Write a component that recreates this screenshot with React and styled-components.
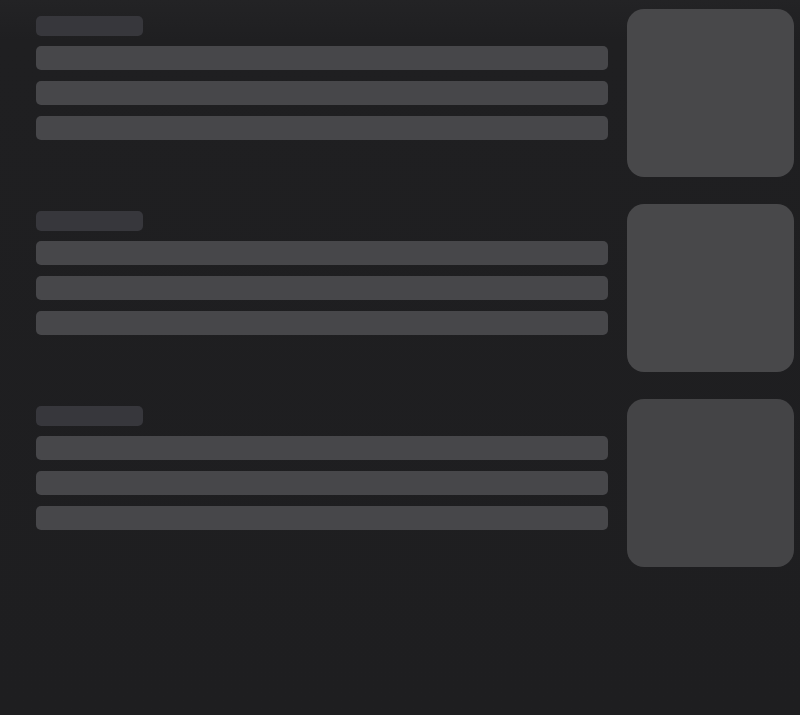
import React from "react";
import styled, { createGlobalStyle } from "styled-components";

const Global = createGlobalStyle`
  html, body { margin: 0; padding: 0; background: #1e1e20; }
  body { font-family: "Inter", "Liberation Sans", sans-serif; }
  #root { min-height: 715px; }
`;

const Page = styled.div`
  min-height: 715px;
  box-sizing: border-box;
  padding: 9px 6px 0 36px;
  display: flex;
  flex-direction: column;
  gap: 27px;
  background: linear-gradient(#232325 0px, #1f1f21 40px, #1e1e20 100%);
`;

const Row = styled.div`
  display: flex;
  gap: 19px;
  align-items: flex-start;
`;

const Text = styled.div`
  flex: 1;
  padding-top: 7px;
  display: flex;
  flex-direction: column;
`;

const Title = styled.div`
  width: 107px;
  height: 20px;
  border-radius: 5px;
  background: #37373c;
  margin-bottom: 10px;
`;

const Lines = styled.div`
  display: flex;
  flex-direction: column;
  gap: 11px;
`;

const Line = styled.div`
  height: 24px;
  border-radius: 5px;
  background: #47474a;
`;

const Thumb = styled.div`
  width: 167px;
  height: 168px;
  flex: none;
  border-radius: 17px;
  background: ${(p) => p.$tone};
`;

const tones = ["#48484a", "#48484a", "#444446"];

export default function App() {
  return (
    <>
      <Global />
      <Page>
        {tones.map((t, i) => (
          <Row key={i}>
            <Text>
              <Title />
              <Lines>
                <Line />
                <Line />
                <Line />
              </Lines>
            </Text>
            <Thumb $tone={t} />
          </Row>
        ))}
      </Page>
    </>
  );
}
